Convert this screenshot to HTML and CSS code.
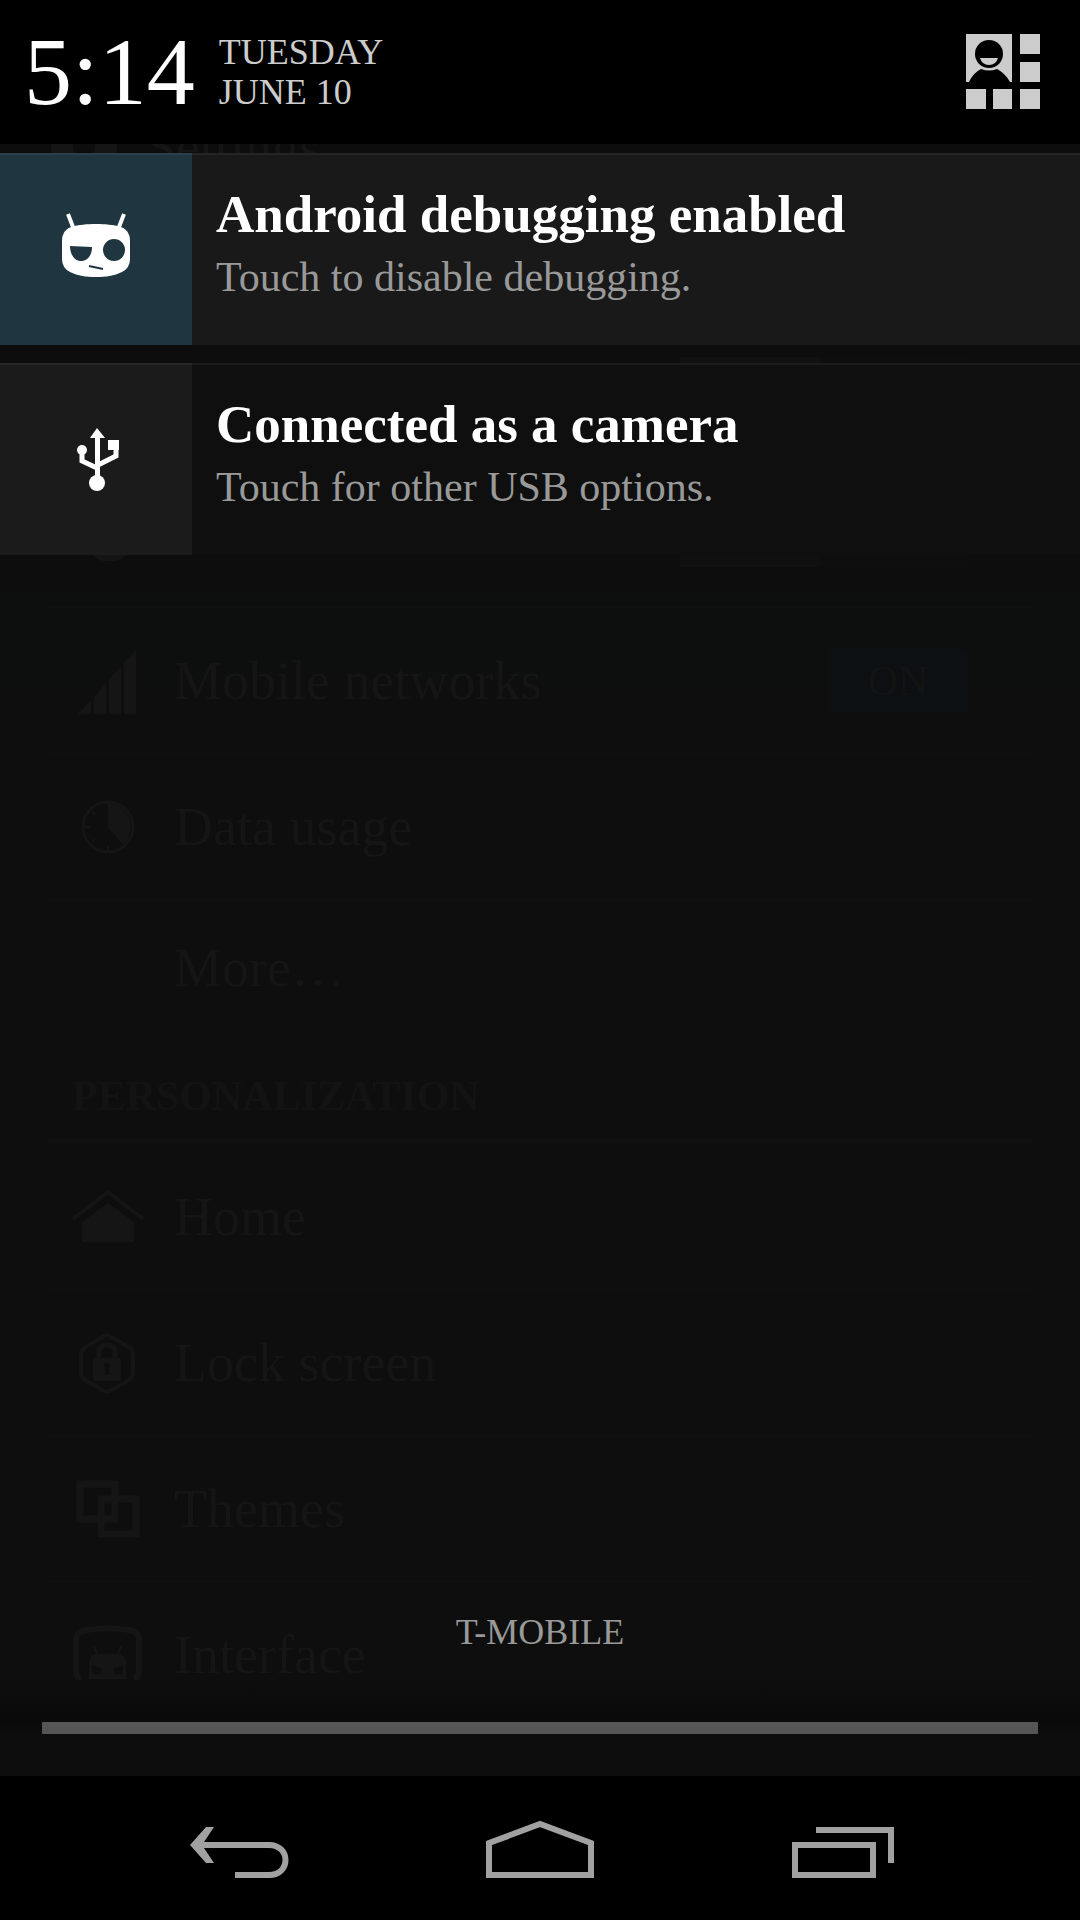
FILE: index.html
```html
<!DOCTYPE html>
<html lang="en">
<head>
<meta charset="utf-8">
<meta name="viewport" content="width=device-width, initial-scale=1">
<title>Notifications</title>
<link rel="stylesheet" href="styles.css">
</head>
<body>
<div class="screen">

  <!-- Settings app, dimmed behind the notification shade -->
  <div class="settings">
    <div class="app-bar">
      <svg class="app-icon" width="68" height="68" viewBox="0 0 68 68" aria-hidden="true"><circle cx="34" cy="34" r="22" fill="none" stroke="currentColor" stroke-width="22"/></svg>
      <span class="app-title">Settings</span>
    </div>
    <div class="section-space"></div>
    <div class="row">
      <span class="row-icon"></span>
      <span class="row-label"></span>
      <label class="switch"><input type="checkbox" aria-label="Wi-Fi"></label>
    </div>
    <div class="row">
      <span class="row-icon"><svg width="72" height="72" viewBox="0 0 72 72" aria-hidden="true"><rect x="19" y="2" width="37" height="60" rx="14" fill="currentColor"/></svg></span>
      <span class="row-label"></span>
      <label class="switch"><input type="checkbox" aria-label="Bluetooth"></label>
    </div>
    <div class="row">
      <span class="row-icon"><svg width="72" height="72" viewBox="0 0 72 72" fill="currentColor" aria-hidden="true"><path d="M6 69 19 55V69ZM22 52 34 38V69H22ZM37 35 49 21V69H37ZM52 18 64 5V69H52Z"/></svg></span>
      <span class="row-label">Mobile networks</span>
      <label class="switch"><input type="checkbox" aria-label="Mobile networks" checked><span class="switch-text">ON</span></label>
    </div>
    <div class="row">
      <span class="row-icon"><svg width="72" height="72" viewBox="0 0 72 72" aria-hidden="true"><circle cx="36" cy="36" r="25" fill="none" stroke="currentColor" stroke-width="3"/><path d="M34 11A25 25 0 0 1 51 54L36 36V16Z" fill="currentColor"/><path d="M36 60v-5M13 36h5M20 20l3 4M20 52l3-4" stroke="currentColor" stroke-width="2"/></svg></span>
      <span class="row-label">Data usage</span>
    </div>
    <div class="row row-last">
      <span class="row-icon"></span>
      <span class="row-label">More…</span>
    </div>
    <h2 class="section-title">PERSONALIZATION</h2>
    <div class="row">
      <span class="row-icon"><svg width="72" height="72" viewBox="0 0 72 72" aria-hidden="true"><path d="M1 38 36 11 71 38" fill="none" stroke="currentColor" stroke-width="4"/><path d="M10 61V41L36 22 62 41V61Z" fill="currentColor"/></svg></span>
      <span class="row-label">Home</span>
    </div>
    <div class="row">
      <span class="row-icon"><svg width="72" height="72" viewBox="0 0 72 72" aria-hidden="true"><path d="M35 8Q37 8 58 21Q61 24 61 28V46Q61 50 58 52Q37 65 35 65Q33 65 12 52Q9 50 9 46V28Q9 24 12 21Q33 8 35 8Z" fill="none" stroke="currentColor" stroke-width="4"/><path d="M27 32V25Q27 18 35 18Q43 18 43 25V32" fill="none" stroke="currentColor" stroke-width="5"/><rect x="21" y="31" width="28" height="23" rx="2" fill="currentColor"/><path d="M32 39a3 3 0 1 1 5 2v7h-4v-7Z" fill="#0e0e0e"/></svg></span>
      <span class="row-label">Lock screen</span>
    </div>
    <div class="row">
      <span class="row-icon"><svg width="72" height="72" viewBox="0 0 72 72" fill="none" stroke="currentColor" stroke-width="7" aria-hidden="true"><path d="M8 11H43V46H8ZM29 26H64V61H29Z"/></svg></span>
      <span class="row-label">Themes</span>
    </div>
    <div class="row">
      <span class="row-icon"><svg width="72" height="72" viewBox="0 0 72 72" aria-hidden="true"><path d="M9 60Q3 58 4 50V20Q5 12 14 11Q36 8 58 11Q66 12 67 20V50Q67 58 62 60" fill="none" stroke="currentColor" stroke-width="6"/><path d="M17 60V42Q18 36 24 35L21 29V27H23L26 35H45L48 27H50V29L47 35Q53 36 54 42V60Z" fill="currentColor"/><path d="M20 46l10 4q-1 6-6 6t-4-10ZM51 46l-10 4q1 6 6 6t4-10Z" fill="#0e0e0e"/></svg></span>
      <span class="row-label">Interface</span>
    </div>
  </div>

  <!-- Notification shade -->
  <div class="shade">
    <header class="status">
      <time class="clock">5:14</time>
      <div class="date">TUESDAY<br>JUNE 10</div>
      <button class="quick" type="button" aria-label="Quick settings">
        <svg width="76" height="76" viewBox="0 0 76 76" fill="#cccccc" aria-hidden="true">
          <path d="M1 0H47V48H45Q40 39 32 35Q24 38 16 35Q8 39 4 48H1Z"/>
          <circle cx="24" cy="20" r="14" fill="#000"/>
          <path d="M15 24H33Q31 31 24 31T15 24Z"/>
          <path d="M55 0h20v20H55ZM55 28h20v20H55ZM1 55h20v20H1ZM28 55h19v20H28ZM55 55h20v20H55Z"/>
        </svg>
      </button>
    </header>

    <main class="notifications">
      <a class="note note-ongoing" href="#">
        <span class="note-icon">
          <svg width="72" height="72" viewBox="0 5 72 72" aria-hidden="true">
            <path d="M8 6 13 19M64 6 59 19" stroke="#fff" stroke-width="4"/>
            <path d="M36 16C46 16 53 17 58 18Q70 21 70 33V51Q70 60 62 64C54 68 46 69 36 69S18 68 10 64Q2 60 2 51V33Q2 21 14 18C19 17 26 16 36 16Z" fill="#fff"/>
            <path d="M10 38 32 39C32 48 27 53 21 53S10 47 10 38Z" fill="#1f3540"/>
            <circle cx="54" cy="42" r="11" fill="#1f3540"/>
            <path d="M29 58 43 61" stroke="#1f3540" stroke-width="2"/>
          </svg>
        </span>
        <span class="note-body">
          <strong class="note-title">Android debugging enabled</strong>
          <span class="note-text">Touch to disable debugging.</span>
        </span>
      </a>
      <a class="note" href="#">
        <span class="note-icon">
          <svg width="72" height="72" viewBox="0 0 72 72" fill="#fff" aria-hidden="true">
            <path d="M37 5 45 15H30Z"/><path d="M35 14h5v43h-5Z"/>
            <circle cx="37" cy="60" r="8"/><circle cx="22" cy="27" r="5"/>
            <path d="M48 17h11v10H48Z"/>
            <path d="M22 28V38L37 45M56 26V33L38 42" fill="none" stroke="#fff" stroke-width="5"/>
          </svg>
        </span>
        <span class="note-body">
          <strong class="note-title">Connected as a camera</strong>
          <span class="note-text">Touch for other USB options.</span>
        </span>
      </a>
    </main>

    <div class="carrier">T-MOBILE</div>
    <div class="handle"><div class="handle-bar"></div></div>

    <nav class="nav">
      <button type="button" aria-label="Back">
        <svg width="110" height="72" viewBox="0 0 110 72" aria-hidden="true"><path d="M18 33H90C112 33 112 63 90 63H56" fill="none" stroke="#a1a1a1" stroke-width="6"/><path d="M27 15h8L23 33 35 51H27L11 33Z" fill="#a1a1a1"/></svg>
      </button>
      <button type="button" aria-label="Home">
        <svg width="110" height="72" viewBox="0 0 110 72" fill="none" stroke="#a1a1a1" stroke-width="6" aria-hidden="true"><path d="M4 63V31L55 12 106 31V63Z"/></svg>
      </button>
      <button type="button" aria-label="Recent apps">
        <svg width="110" height="72" viewBox="0 0 110 72" fill="none" stroke="#a1a1a1" stroke-width="6" aria-hidden="true"><path d="M4 33H82V63H4ZM25 18H100V51"/></svg>
      </button>
    </nav>
  </div>
</div>
</body>
</html>
```
FILE: styles.css
```css
* { box-sizing: border-box; }

body {
  margin: 0;
  background: #000;
  font-family: "Liberation Serif", serif;
}

button {
  display: flex;
  padding: 0;
  border: 0;
  background: none;
}

svg { display: block; }

.screen {
  position: relative;
  min-height: 100vh;
}

/* Dimmed settings page */
.settings {
  position: absolute;
  inset: 0;
  overflow: hidden;
  padding: 75px 48px 0;
  color: #151515;
  background: linear-gradient(#0d0d0d 580px, #0d0f0e 620px, #0d0f0e 660px, #0e0e0e 700px);
}

.app-bar {
  display: flex;
  align-items: center;
  gap: 28px;
  height: 144px;
  padding-left: 2px;
}

.app-title { font-size: 54px; }

.section-space { height: 97px; }

.row {
  display: flex;
  align-items: center;
  height: 146px;
  padding: 0 60px 0 24px;
  border-bottom: 1px solid #101010;
}

.row-last {
  height: 136px;
  border-bottom: 0;
}

.row-icon {
  flex: none;
  width: 102px;
}

.row-label {
  flex: 1;
  font-size: 54px;
  line-height: 64px;
}

.section-title {
  height: 108px;
  margin: 0;
  padding: 36px 24px 0;
  border-bottom: 5px solid #101010;
  font-size: 42px;
  line-height: 48px;
  color: #131313;
}

.switch {
  display: grid;
  justify-items: end;
  align-items: center;
  width: 296px;
  height: 64px;
  padding: 0 4px;
}

.switch input {
  grid-area: 1 / 1;
  justify-self: stretch;
  appearance: none;
  height: 64px;
  margin: 0;
  background: linear-gradient(90deg, #101010 140px, #0e0e0e 140px);
}

.switch input:checked {
  justify-self: end;
  width: 140px;
  border-radius: 3px;
  background: #0c1012;
}

.switch-text {
  grid-area: 1 / 1;
  width: 140px;
  text-align: center;
  font-size: 42px;
  color: #131313;
}

/* Shade */
.shade {
  position: relative;
  display: flex;
  flex-direction: column;
  min-height: 100vh;
}

.status {
  display: flex;
  align-items: center;
  height: 144px;
  padding: 0 39px 0 24px;
  background: #000;
}

.clock {
  font-size: 96px;
  line-height: 144px;
  color: #fff;
}

.date {
  flex: 1;
  padding-left: 24px;
  font-size: 36px;
  line-height: 40px;
  color: #ccc;
}

.notifications {
  display: flex;
  flex-direction: column;
  gap: 18px;
  padding-top: 9px;
}

.note {
  display: flex;
  height: 192px;
  background: #0f0f0f;
  box-shadow: inset 0 2px #1c1c1c;
  color: #fff;
  text-decoration: none;
}

.note-ongoing {
  background: #191919;
  box-shadow: inset 0 2px #242424;
}

.note-icon {
  display: grid;
  place-items: center;
  width: 192px;
  background: #1b1b1b;
  box-shadow: inset 0 2px #252525;
}

.note-ongoing .note-icon {
  background: #1f3540;
  box-shadow: inset 0 2px #2a3f49;
}

.note-body {
  display: flex;
  flex-direction: column;
  padding: 29px 24px;
}

.note-title {
  font-size: 53px;
  line-height: 64px;
}

.note-text {
  font-size: 42px;
  line-height: 62px;
  color: #999;
}

.carrier {
  margin-top: auto;
  padding-bottom: 28px;
  text-align: center;
  font-size: 36px;
  line-height: 40px;
  color: #999;
}

.handle {
  padding: 42px;
  background: linear-gradient(#0d0d0d, #0a0a0a 42px, #0d0d0d 54px);
}

.handle-bar {
  height: 12px;
  background: #555;
}

.nav {
  display: flex;
  justify-content: center;
  align-items: center;
  gap: 196px;
  height: 144px;
  background: #000;
}
```
